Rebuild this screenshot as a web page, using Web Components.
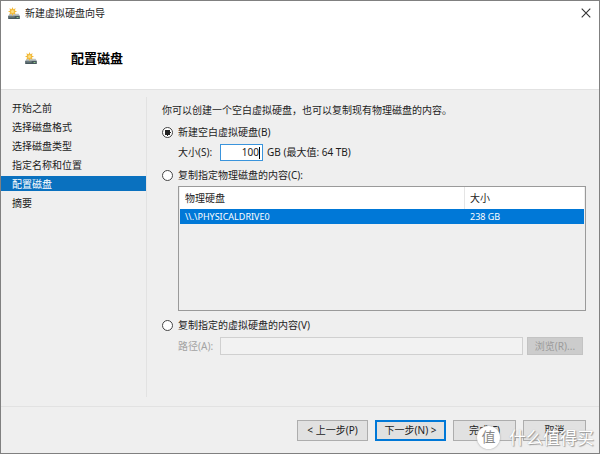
<!DOCTYPE html>
<html lang="zh-CN">
<head>
<meta charset="utf-8">
<title>新建虚拟硬盘向导</title>
<style>
  html, body { margin: 0; }
  body {
    min-height: 100vh;
    display: flex;
    --wiz-bg: #efefef;
    --wiz-line: #e2e2e2;
    --wiz-text: #1c1c1c;
    --wiz-accent: #0078d7;
    --wiz-border: #808080;
    font: 10px/15px "Noto Sans", "Noto Sans CJK SC", sans-serif;
    color: var(--wiz-text);
  }
</style>
</head>
<body>
<wizard-window title-text="新建虚拟硬盘向导">
  <wizard-heading slot="heading">配置磁盘</wizard-heading>
  <wizard-steps slot="steps" current="4" steps="开始之前|选择磁盘格式|选择磁盘类型|指定名称和位置|配置磁盘|摘要"></wizard-steps>
  <disk-config-page></disk-config-page>
  <wizard-footer slot="footer"></wizard-footer>
</wizard-window>

<script>
/* New-disk icon: a grey drive with a yellow spark on its top left corner. */
const DISK_ICON = `<svg width="12" height="13" viewBox="0 0 12 13" aria-hidden="true">
  <path d="M1.600 6.800h9l1.200 2.200H.4z" fill="#bcc4c6"/>
  <path d="M.2 8.800h11.600v3.200H.2z" fill="#46575c"/>
  <path d="M1.200 9.900h5.500" stroke="#8b999d" stroke-width=".9"/>
  <path d="M8.600 10.500h1.900" stroke="#8fc48b" stroke-width="1"/>
  <path d="M4.500 0l.9 2.200L7.700 1.200l-.9 2.300 2.200 1-2.200.9.900 2.300-2.300-.9-.9 2.200-.9-2.200-2.300.9.900-2.300L0 4.500l2.200-1-.9-2.300 2.300 1z" fill="#f2b93a"/>
  <circle cx="4.500" cy="4.500" r="1.500" fill="#fbdf84"/>
</svg>`;

/**
 * <wizard-window> — window frame: title bar, heading band, steps, page, footer.
 * Slots: heading, steps, (default) page, footer
 */
class WizardWindow extends HTMLElement {
  constructor() {
    super();
    this.attachShadow({ mode: 'open' });
  }

  connectedCallback() {
    this.shadowRoot.innerHTML = `
      <style>${this._css()}</style>
      <header class="ww__bar">
        ${DISK_ICON}
        <span class="ww__title">${this.getAttribute('title-text') || ''}</span>
        <button class="ww__close" type="button" aria-label="关闭">
          <svg width="10" height="10" viewBox="0 0 10 10" aria-hidden="true">
            <path d="M.7.7l8.600 8.600M9.300.7L.7 9.300" stroke="#333" stroke-width="1.100"/>
          </svg>
        </button>
      </header>
      <slot name="heading"></slot>
      <div class="ww__body">
        <slot name="steps"></slot>
        <main class="ww__page"><slot></slot></main>
      </div>
      <slot name="footer"></slot>`;
  }

  _css() {
    return `
:host {
  flex: 1;
  display: flex;
  flex-direction: column;
  box-sizing: border-box;
  border: 1px solid var(--wiz-border);
  background: var(--wiz-bg);
}
.ww__bar {
  display: flex;
  align-items: center;
  gap: 5px;
  height: 24px;
  padding: 0 8px 0 7px;
  background: #fff;
}
.ww__title { flex: 1; }
.ww__close {
  display: flex;
  padding: 0;
  border: 0;
  background: none;
}
.ww__body {
  flex: 1;
  display: flex;
}
.ww__page {
  flex: 1;
  min-width: 0;
  padding: 13px 13px 0 15px;
}`;
  }
}

/** <wizard-heading> — white band with the name of the current page. */
class WizardHeading extends HTMLElement {
  constructor() {
    super();
    this.attachShadow({ mode: 'open' }).innerHTML = `
      <style>
:host {
  display: flex;
  align-items: center;
  gap: 34px;
  height: 62px;
  padding: 2px 24px 0;
  background: #fff;
  border-bottom: 1px solid var(--wiz-line);
}
h1 { margin: 0; font-size: 13px; line-height: 20px; font-weight: 700; color: #000; }
      </style>
      ${DISK_ICON}
      <h1><slot></slot></h1>`;
  }
}

/**
 * <wizard-steps> — step list at the left.
 * Attributes:
 *   steps    names joined by "|"
 *   current  index of the active step
 */
class WizardSteps extends HTMLElement {
  constructor() {
    super();
    this.attachShadow({ mode: 'open' });
  }

  connectedCallback() {
    const current = Number(this.getAttribute('current'));
    const items = (this.getAttribute('steps') || '').split('|').map((s, i) =>
      `<li><a href="#step-${i + 1}" ${i === current ? 'aria-current="step"' : ''}>${s}</a></li>`).join('');
    this.shadowRoot.innerHTML = `
      <style>
:host { display: flex; width: 146px; padding: 7px 0 9px; box-sizing: border-box; }
nav { flex: 1; border-right: 1px solid var(--wiz-line); }
ol {
  display: flex;
  flex-direction: column;
  gap: 4px;
  margin: 0;
  padding: 3px 0 0;
  list-style: none;
}
a {
  display: block;
  padding: 2px 0 0 11px;
  line-height: 13px;
  color: inherit;
  text-decoration: none;
}
a[aria-current] { background: #0a71bf; color: #fff; }
      </style>
      <nav><ol>${items}</ol></nav>`;
  }
}

/** <physical-disk-list> — list box with the physical disks of the machine. */
class PhysicalDiskList extends HTMLElement {
  constructor() {
    super();
    this.attachShadow({ mode: 'open' }).innerHTML = `
      <style>
:host {
  display: block;
  box-sizing: border-box;
  height: 125px;
  padding: 0 1px;
  border: 1px solid #9a9a9a;
}
table {
  width: 100%;
  table-layout: fixed;
  border-collapse: separate;
  border-spacing: 0;
}
col:last-child { width: 119px; }
th, td { padding: 0 5px; text-align: left; font-weight: 400; }
th { height: 22px; background: #fff; }
th:first-child { border-right: 1px solid #e5e5e5; }
td { height: 15px; font-size: 9px; line-height: 15px; background: var(--wiz-accent); color: #fff; }
      </style>
      <table>
        <colgroup><col><col></colgroup>
        <thead><tr><th scope="col">物理硬盘</th><th scope="col">大小</th></tr></thead>
        <tbody><tr aria-selected="true"><td>\\\\.\\PHYSICALDRIVE0</td><td>238 GB</td></tr></tbody>
      </table>`;
  }
}

/** <disk-config-page> — the three sources for the new disk. */
class DiskConfigPage extends HTMLElement {
  constructor() {
    super();
    this.attachShadow({ mode: 'open' }).innerHTML = `
      <style>${this._css()}</style>
      <p>你可以创建一个空白虚拟硬盘，也可以复制现有物理磁盘的内容。</p>
      <section>
        <label class="choice"><input type="radio" name="source" checked>新建空白虚拟硬盘(B)</label>
        <div class="row">
          <label class="name" for="size">大小(S):</label>
          <span class="size"><input id="size" type="text" value="100"></span>
          <span>GB (最大值: 64 TB)</span>
        </div>
      </section>
      <section>
        <label class="choice"><input type="radio" name="source">复制指定物理磁盘的内容(C):</label>
        <physical-disk-list></physical-disk-list>
      </section>
      <section>
        <label class="choice"><input type="radio" name="source">复制指定的虚拟硬盘的内容(V)</label>
        <div class="row row--off">
          <label class="name" for="path">路径(A):</label>
          <input id="path" class="path" type="text" disabled>
          <button type="button" disabled>浏览(R)...</button>
        </div>
      </section>`;
  }

  _css() {
    return `
:host { display: flex; flex-direction: column; gap: 7px; }
p { margin: 0; }
section { display: flex; flex-direction: column; gap: 4px; }
input, button { box-sizing: border-box; font: inherit; color: inherit; margin: 0; }
.choice { display: flex; align-items: center; gap: 5px; height: 14px; }
input[type="radio"] {
  appearance: none;
  width: 11px;
  height: 11px;
  border: 1px solid #444;
  border-radius: 50%;
  background: #fff;
}
input[type="radio"]:checked {
  background: radial-gradient(circle, #222 0 3px, #fff 3px);
}
.row { display: flex; align-items: center; gap: 4px; padding: 1px 0 0 16px; }
.name { width: 38px; }
.size {
  display: flex;
  align-items: center;
  box-sizing: border-box;
  width: 43px;
  height: 17px;
  padding-right: 2px;
  border: 1px solid #3a94dc;
  background: #fff;
}
/* text cursor */
.size::after { content: ""; width: 1px; height: 12px; background: #000; }
.size input {
  flex: 1;
  min-width: 0;
  padding: 0;
  border: 0;
  outline: 0;
  background: none;
  text-align: right;
}
.row--off { padding-right: 3px; color: #a3a3a3; }
.path {
  flex: 1;
  min-width: 0;
  height: 18px;
  border: 1px solid #d0d0d0;
  background: #f2f2f2;
}
.row button {
  width: 56px;
  height: 18px;
  padding: 0;
  border: 1px solid #c3c3c3;
  background: #cccccc;
  color: #9b9b9b;
}
physical-disk-list { margin-left: 16px; }`;
  }
}

/** <wizard-footer> — navigation buttons and the site mark over them. */
class WizardFooter extends HTMLElement {
  constructor() {
    super();
    this.attachShadow({ mode: 'open' }).innerHTML = `
      <style>
:host {
  position: relative;
  display: flex;
  justify-content: flex-end;
  gap: 7px;
  padding: 13px 13px 12px;
  border-top: 1px solid var(--wiz-line);
}
button {
  box-sizing: border-box;
  width: 63px;
  height: 21px;
  padding: 0;
  border: 1px solid #adadad;
  background: #e1e1e1;
  font: inherit;
  color: inherit;
}
.wide { width: 71px; }
.default { border: 2px solid var(--wiz-accent); }
.mark {
  position: absolute;
  right: 5px;
  bottom: 4px;
  display: flex;
  align-items: center;
  gap: 9px;
  font-size: 17px;
  line-height: 22px;
  color: #fff;
  text-shadow: 1px 1px 1px #999, 0 0 1px #aaa;
  pointer-events: none;
}
.mark b {
  width: 23px;
  height: 23px;
  border-radius: 50%;
  background: #fff;
  box-shadow: 0 0 2px #999;
  font-size: 14px;
  font-weight: 400;
  text-align: center;
  text-shadow: none;
  color: #888;
}
      </style>
      <button class="wide" type="button">&lt; 上一步(P)</button>
      <button class="wide default" type="button">下一步(N) &gt;</button>
      <button type="button">完成(F)</button>
      <button type="button">取消</button>
      <div class="mark"><b>值</b><span>什么值得买</span></div>`;
  }
}

customElements.define('wizard-window', WizardWindow);
customElements.define('wizard-heading', WizardHeading);
customElements.define('wizard-steps', WizardSteps);
customElements.define('physical-disk-list', PhysicalDiskList);
customElements.define('disk-config-page', DiskConfigPage);
customElements.define('wizard-footer', WizardFooter);
</script>
</body>
</html>
